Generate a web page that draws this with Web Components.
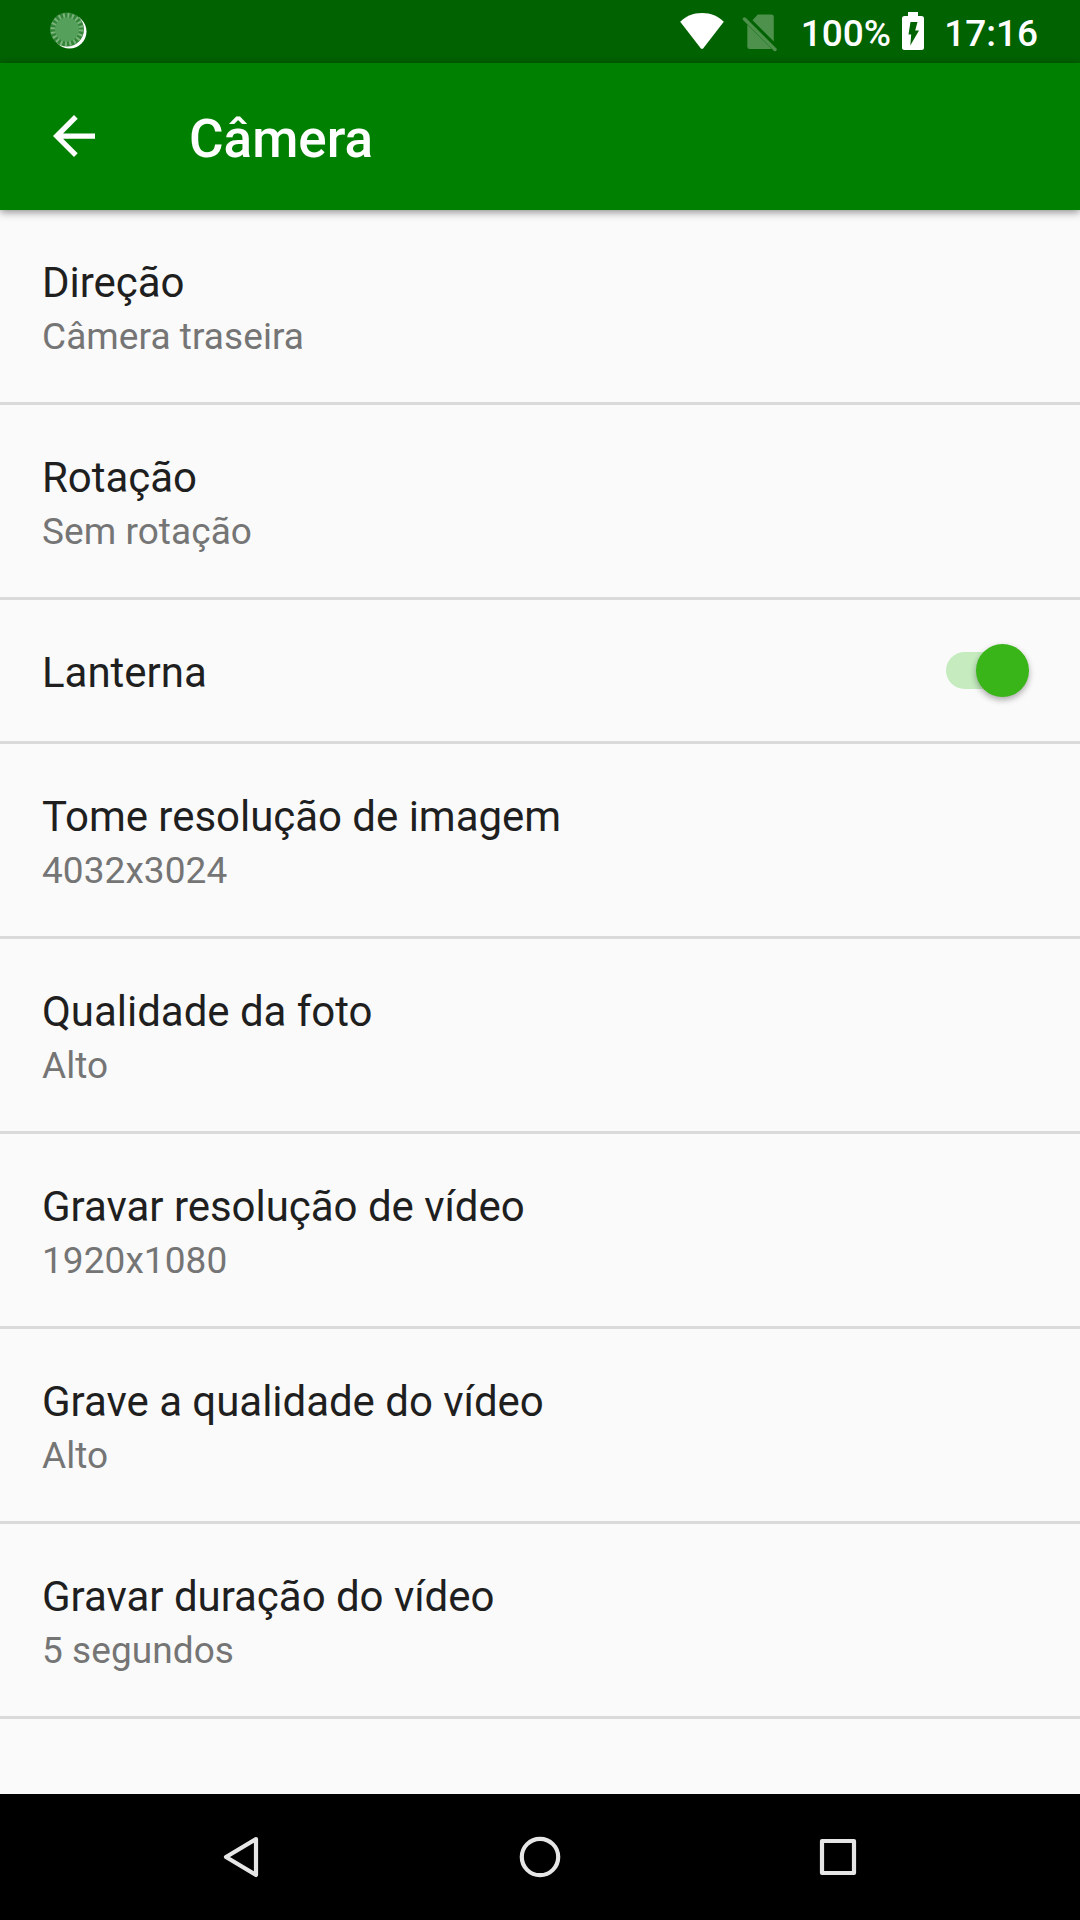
<!DOCTYPE html>
<html lang="pt">
<head>
<meta charset="utf-8">
<title>Câmera</title>
<style>
body{margin:0;background:#fafafa;font-family:Roboto,sans-serif}
</style>
</head>
<body>
<settings-screen></settings-screen>
<script>
const define=(name,html,setup)=>customElements.define(name,class extends HTMLElement{
  constructor(){super();this.attachShadow({mode:'open'}).innerHTML=html;}
  connectedCallback(){if(setup)setup(this,this.shadowRoot);}
});

define('status-bar',`<style>
:host{display:flex;height:63px;background:#006200;color:#fff;font-size:37px;font-weight:500;line-height:43px;box-sizing:border-box;padding:0 42px 0 50px;justify-content:space-between;align-items:flex-start}
svg{display:block;flex:none}
.right{display:flex;align-items:flex-start}
.text{margin-top:12px;white-space:nowrap}
.wifi{margin:13px 17px 0 0}.sim{margin:13px 24px 0 0}.bat{margin:12px 20px 0 11px}
</style>
<svg width="38" height="38" viewBox="0 0 38 38" style="margin-top:12px"><circle cx="19.500" cy="19.500" r="17" fill="#fff"/><circle cx="17" cy="17.500" r="17" fill="#338538"/><circle cx="17" cy="17.500" r="14" fill="none" stroke="#8fc08f" stroke-width="5" stroke-dasharray="1.900 2.500" opacity=".8"/><circle cx="17" cy="17.500" r="12" fill="#55a05b"/></svg>
<div class="right">
<svg class="wifi" width="46" height="37" viewBox="0 0 46 37"><path d="M1.200 8.800C7 3.200 14 0 23 0s16 3.200 21.800 8.800L24.300 35.300q-1.300 1.500-2.600 0Z" fill="#fff"/></svg>
<svg class="sim" width="35" height="39" viewBox="0 0 35 39"><g fill="#4d914d"><path d="M10.500 7.200 15.800 1.600H29.300Q31.800 1.600 31.800 4V28.500Z"/><path d="M5.300 11.500 29.200 35.400V36H7.700Q5.300 36 5.300 33.500Z"/></g><path d="m2.500 6 30.500 30.500" stroke="#4d914d" stroke-width="3.500" stroke-linecap="round"/></svg>
<span class="text">100%</span>
<svg class="bat" width="22" height="38" viewBox="0 0 22 38"><path d="M6 0H16V4H19.500Q22 4 22 6.500V35.500Q22 38 19.500 38H2.500Q0 38 0 35.500V6.500Q0 4 2.500 4H6Z" fill="#fff"/><path d="M8.500 10H15.500L13.200 18.500H17L8.300 33.500 9.200 22.500H6.500Z" fill="#006200"/></svg>
<span class="text">17:16</span>
</div>`);

define('app-bar',`<style>
:host{display:flex;height:147px;background:#008000;color:#fff;align-items:flex-start;box-sizing:border-box;padding-left:53px;box-shadow:0 2px 8px rgba(0,0,0,.45);position:relative;z-index:1}
svg{display:block;margin:52px 94px 0 0}
h1{margin:45px 0 0;font-size:53px;font-weight:500;line-height:62px}
</style>
<svg width="42" height="42" viewBox="4 4 16 16"><path d="M20 11H7.830l5.590-5.590L12 4l-8 8 8 8 1.410-1.410L7.830 13H20v-2z" fill="#fff"/></svg>
<h1><slot></slot></h1>`);

define('toggle-switch',`<style>
:host{display:flex;width:83px;height:53px;align-items:center}
.track{width:74px;height:37px;border-radius:19px;background:#c5ebbf;display:flex;align-items:center}
.thumb{flex:none;margin-left:30px;width:53px;height:53px;border-radius:50%;background:#39b519;box-shadow:0 3px 6px rgba(0,0,0,.32)}
</style><div class="track"><div class="thumb"></div></div>`);

define('setting-row',`<style>
:host{display:flex;justify-content:space-between;align-items:flex-start;height:195px;box-sizing:border-box;padding:48px 51px 0 42px;border-bottom:3px solid #dadada}
:host([compact]){height:144px}
.title{font-size:42px;line-height:49px;color:#1f1f1f;letter-spacing:-.03px}
.value{margin-top:8px;font-size:37px;line-height:43px;color:#757575;letter-spacing:.06px}
::slotted(toggle-switch){margin-top:-4px}
</style><div><div class="title"></div><div class="value"></div></div><slot></slot>`,(el,root)=>{
  root.querySelector('.title').textContent=el.getAttribute('label');
  const value=root.querySelector('.value');
  if(el.hasAttribute('value'))value.textContent=el.getAttribute('value');else value.remove();
});

define('nav-bar',`<style>
:host{display:flex;height:126px;background:#000;justify-content:center;align-items:center}
span{width:298px;display:flex;justify-content:center}
svg{display:block}
g{fill:none;stroke:#e6e6e6;stroke-width:4.200;stroke-linejoin:round}
</style>
<span><svg width="44" height="44"><g><path d="M36 4 6 22 36 40Z"/></g></svg></span>
<span><svg width="44" height="44"><g><circle cx="22" cy="22" r="18.200"/></g></svg></span>
<span><svg width="44" height="44"><g><path d="M6 6H38V38H6Z"/></g></svg></span>`);

define('settings-screen',`<style>
:host{display:flex;flex-direction:column;width:1080px;height:1920px;background:#fafafa}
main{flex:1;min-height:0}
</style>
<status-bar></status-bar>
<app-bar>Câmera</app-bar>
<main>
<setting-row label="Direção" value="Câmera traseira"></setting-row>
<setting-row label="Rotação" value="Sem rotação"></setting-row>
<setting-row compact label="Lanterna"><toggle-switch></toggle-switch></setting-row>
<setting-row label="Tome resolução de imagem" value="4032x3024"></setting-row>
<setting-row label="Qualidade da foto" value="Alto"></setting-row>
<setting-row label="Gravar resolução de vídeo" value="1920x1080"></setting-row>
<setting-row label="Grave a qualidade do vídeo" value="Alto"></setting-row>
<setting-row label="Gravar duração do vídeo" value="5 segundos"></setting-row>
</main>
<nav-bar></nav-bar>`);
</script>
</body>
</html>
